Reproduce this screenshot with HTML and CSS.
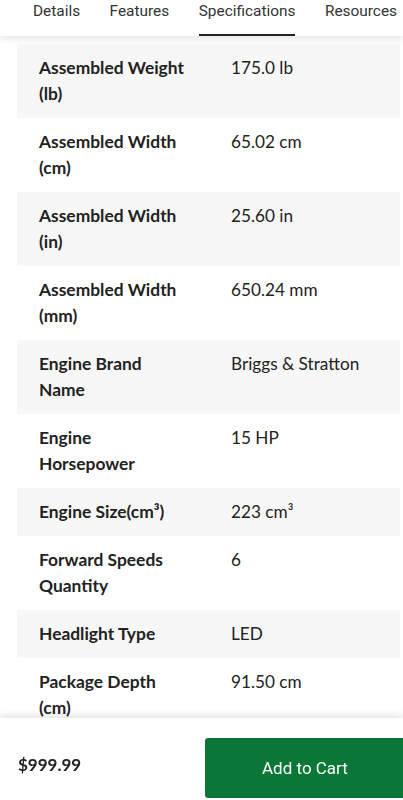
FILE: index.html
```html
<!DOCTYPE html>
<html lang="en">
<head>
<meta charset="utf-8">
<title>Specifications</title>
<link rel="stylesheet" href="styles.css">
</head>
<body>
<nav class="tabs">
  <span class="tab">Details</span>
  <span class="tab">Features</span>
  <span class="tab active">Specifications</span>
  <span class="tab">Resources</span>
</nav>
<main class="specs">
  <div class="row"><div class="label">Assembled Weight (lb)</div><div class="value">175.0 lb</div></div>
  <div class="row"><div class="label">Assembled Width (cm)</div><div class="value">65.02 cm</div></div>
  <div class="row"><div class="label">Assembled Width (in)</div><div class="value">25.60 in</div></div>
  <div class="row"><div class="label">Assembled Width (mm)</div><div class="value">650.24 mm</div></div>
  <div class="row"><div class="label">Engine Brand Name</div><div class="value">Briggs &amp; Stratton</div></div>
  <div class="row"><div class="label">Engine Horsepower</div><div class="value">15 HP</div></div>
  <div class="row"><div class="label">Engine Size(cm³)</div><div class="value">223 cm³</div></div>
  <div class="row"><div class="label">Forward Speeds Quantity</div><div class="value">6</div></div>
  <div class="row"><div class="label">Headlight Type</div><div class="value">LED</div></div>
  <div class="row"><div class="label">Package Depth (cm)</div><div class="value">91.50 cm</div></div>
</main>
<footer class="buybar">
  <div class="price">$999.99</div>
  <button class="cart">Add to Cart</button>
</footer>
</body>
</html>
```
FILE: styles.css
```css
html, body {
  margin: 0;
  padding: 0;
  background: #fff;
  overflow: hidden;
}
body {
  font-family: Lato, "Liberation Sans", sans-serif;
  color: #222;
  width: 403px;
  height: 800px;
}
.tabs {
  position: relative;
  z-index: 2;
  display: flex;
  gap: 29.5px;
  height: 36px;
  padding-left: 33px;
  background: #fff;
  box-shadow: 0 3px 7px rgba(0, 0, 0, 0.10);
  white-space: nowrap;
}
.tab {
  font-family: Roboto, "Liberation Sans", sans-serif;
  font-size: 15.4px;
  line-height: 22px;
  color: #333;
  box-sizing: border-box;
  height: 36px;
}
.tab.active {
  border-bottom: 2px solid #222;
}
.specs {
  margin: 8px 3px 0 17px;
}
.row {
  display: grid;
  grid-template-columns: 214px 1fr;
  padding: 11px 0;
  font-size: 17px;
  line-height: 26px;
}
.row:nth-child(odd) {
  background: #f7f7f7;
}
.label {
  font-weight: 700;
  font-size: 17.4px;
  padding: 0 43px 0 22px;
}
.value {
  font-weight: 400;
  font-size: 17.2px;
}
.buybar {
  position: fixed;
  left: 0;
  right: 0;
  bottom: 0;
  z-index: 3;
  height: 82px;
  display: grid;
  grid-template-columns: 205px 1fr;
  align-items: center;
  background: #fff;
  box-shadow: 0 -3px 7px rgba(0, 0, 0, 0.10);
  overflow: hidden;
}
.price {
  padding-left: 18px;
  font-size: 17px;
  font-weight: 700;
  margin-top: 10px;
}
.cart {
  width: 210px;
  height: 60px;
  margin-top: 18px;
  border: none;
  border-radius: 3px;
  background: #0a7737;
  color: #fff;
  font-family: Roboto, "Liberation Sans", sans-serif;
  font-size: 17px;
  text-align: left;
  padding: 0 0 0 57px;
}
```
